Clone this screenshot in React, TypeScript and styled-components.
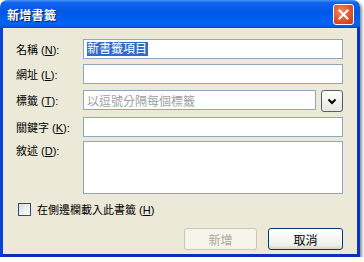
import React from "react";
import styled, { createGlobalStyle } from "styled-components";

const Global = createGlobalStyle`
  html, body { margin: 0; padding: 0; background: #ffffff; }
  * { box-sizing: border-box; }
`;

const FONT = `"Liberation Sans", "Noto Sans CJK TC", sans-serif`;

const Window = styled.div`
  width: 360px;
  height: 257px;
  display: flex;
  flex-direction: column;
  border-radius: 7px 7px 0 0;
  overflow: hidden;
  box-shadow: 2px 2px 3px rgba(0, 0, 0, 0.45);
  font-family: ${FONT};
`;

const TitleBar = styled.div`
  height: 28px;
  flex: none;
  display: flex;
  align-items: center;
  justify-content: space-between;
  padding: 0 6px 0 7px;
  background: linear-gradient(
    to bottom,
    #4a94f8 0%,
    #0f62ec 10%,
    #0058e6 45%,
    #0264f4 85%,
    #0557e2 95%,
    #003dd7 100%
  );
`;

const Title = styled.span`
  color: #ffffff;
  font-weight: bold;
  font-size: 12px;
  letter-spacing: 0.3px;
  text-shadow: 1px 1px 0 #0a1e6e;
`;

const CloseButton = styled.div`
  width: 21px;
  height: 21px;
  border: 1px solid #ffffff;
  border-radius: 3px;
  background: radial-gradient(circle at 40% 35%, #f08a68 0%, #e0542a 55%, #c2360f 100%);
  display: flex;
  align-items: center;
  justify-content: center;
`;

const Frame = styled.div`
  flex: 1;
  background: #ece9d8;
  border-left: 3px solid #0842d6;
  border-right: 3px solid #0836c4;
  border-bottom: 3px solid #0732b8;
  padding: 11px 14px 0 13px;
  display: flex;
  flex-direction: column;
`;

const Form = styled.div`
  display: grid;
  grid-template-columns: 67px 1fr;
  row-gap: 4.5px;
  align-items: center;
`;

const Label = styled.label<{ top?: boolean }>`
  font-size: 11px;
  color: #000000;
  white-space: nowrap;
  align-self: ${(p) => (p.top ? "start" : "center")};
  padding-top: ${(p) => (p.top ? "1px" : "0")};
`;

const Input = styled.div<{ h?: number }>`
  height: ${(p) => p.h ?? 20}px;
  background: #ffffff;
  border: 1px solid #8fa6bf;
  padding: 0 3px;
  display: flex;
  align-items: ${(p) => (p.h ? "flex-start" : "center")};
  font-size: 12px;
  min-width: 0;
`;

const TagInput = styled(Input)`
  flex: 1;
`;

const Selected = styled.span`
  background: #316ac5;
  color: #ffffff;
  line-height: 14px;
  padding-right: 1px;
`;

const Placeholder = styled.span`
  color: #a0a0a0;
  white-space: nowrap;
`;

const TagRow = styled.div`
  display: flex;
  gap: 5px;
  align-items: center;
`;

const DropButton = styled.div`
  width: 22px;
  height: 22px;
  flex: none;
  border: 1px solid #55606e;
  border-radius: 3px;
  background: linear-gradient(to bottom, #ffffff, #e6e5de);
  display: flex;
  align-items: center;
  justify-content: center;
  margin-top: 2px;
`;

const CheckRow = styled.div`
  display: flex;
  align-items: center;
  gap: 6px;
  margin-top: 7px;
  padding-left: 2px;
  font-size: 11px;
`;

const Checkbox = styled.div`
  width: 13px;
  height: 13px;
  border: 1px solid #1c5180;
  background: linear-gradient(135deg, #dcdcd7, #ffffff);
`;

const ButtonRow = styled.div`
  display: flex;
  justify-content: flex-end;
  gap: 11px;
  margin-top: 11px;
`;

const Button = styled.div<{ disabled?: boolean; w: number }>`
  width: ${(p) => p.w}px;
  height: 22px;
  border-radius: 3px;
  border: 1px solid ${(p) => (p.disabled ? "#c9c7ba" : "#003c74")};
  background: ${(p) =>
    p.disabled ? "#f5f4ea" : "linear-gradient(to bottom, #ffffff, #f0f0ea 80%, #d6d0c5)"};
  color: ${(p) => (p.disabled ? "#aca899" : "#000000")};
  font-size: 12px;
  display: flex;
  align-items: center;
  justify-content: center;
`;

const LabelText = ({ name, k }: { name: string; k: string }) => (
  <>
    {name} (<u>{k}</u>):
  </>
);

export default function App() {
  return (
    <>
      <Global />
      <Window>
        <TitleBar>
          <Title>新增書籤</Title>
          <CloseButton>
            <svg width="11" height="11" viewBox="0 0 11 11">
              <path d="M1.5 1.5 L9.5 9.5 M9.5 1.5 L1.5 9.5" stroke="#ffffff" strokeWidth="2" strokeLinecap="square" />
            </svg>
          </CloseButton>
        </TitleBar>
        <Frame>
          <Form>
            <Label>
              <LabelText name="名稱" k="N" />
            </Label>
            <Input>
              <Selected>新書籤項目</Selected>
            </Input>
            <Label>
              <LabelText name="網址" k="L" />
            </Label>
            <Input />
            <Label>
              <LabelText name="標籤" k="T" />
            </Label>
            <TagRow>
              <TagInput>
                <Placeholder>以逗號分隔每個標籤</Placeholder>
              </TagInput>
              <DropButton>
                <svg width="10" height="7" viewBox="0 0 10 7">
                  <path d="M1.5 1.5 L5 5 L8.5 1.5" stroke="#000000" strokeWidth="2" fill="none" />
                </svg>
              </DropButton>
            </TagRow>
            <Label>
              <LabelText name="關鍵字" k="K" />
            </Label>
            <Input />
            <Label top>
              <LabelText name="敘述" k="D" />
            </Label>
            <Input h={53} />
          </Form>
          <CheckRow>
            <Checkbox />
            <span>
              在側邊欄載入此書籤 (<u>H</u>)
            </span>
          </CheckRow>
          <ButtonRow>
            <Button disabled w={73}>新增</Button>
            <Button w={75}>取消</Button>
          </ButtonRow>
        </Frame>
      </Window>
    </>
  );
}
